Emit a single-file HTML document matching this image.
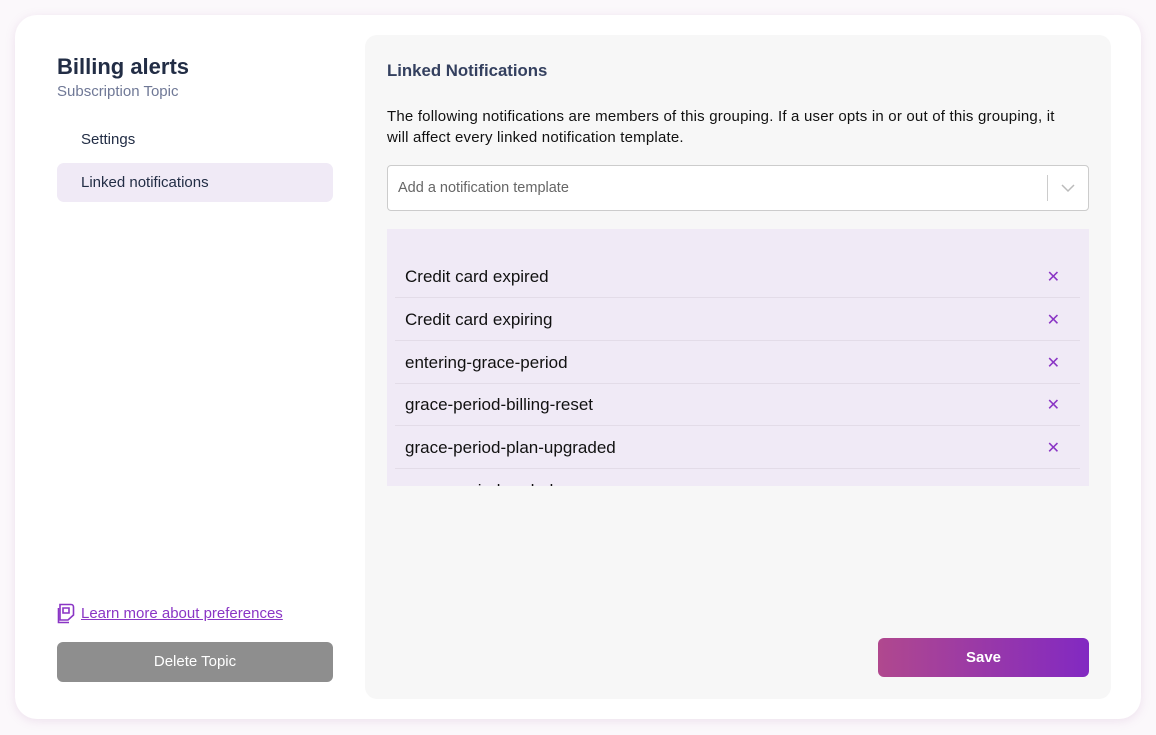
<!DOCTYPE html>
<html><head><meta charset="utf-8"><style>
*{box-sizing:border-box;margin:0;padding:0}
body{width:1156px;height:735px;background:#fbf8fb;font-family:"Liberation Sans",sans-serif;position:relative;overflow:hidden}
.card{position:absolute;left:15px;top:15px;width:1126px;height:704px;background:#fff;border-radius:22px;box-shadow:0 2px 10px rgba(180,120,180,.18)}
.abs{position:absolute}
.panel{left:365px;top:35px;width:746px;height:664px;background:#f7f7f7;border-radius:12px}
.row{position:absolute;left:8px;right:9px;height:43px;border-bottom:1px solid #e3dce8;font-size:17px;color:#111;padding-left:10px;line-height:43px}
.row span{position:absolute;right:20px;top:1px;color:#8a35c5;font-size:16px}
</style></head><body>
<div class="card"></div>
<div class="abs" style="left:57px;top:54px;font-size:22px;font-weight:bold;color:#222d45">Billing alerts</div>
<div class="abs" style="left:57px;top:83px;font-size:15px;color:#6f7896">Subscription Topic</div>
<div class="abs" style="left:81px;top:131px;font-size:15px;color:#222d45">Settings</div>
<div class="abs" style="left:57px;top:163px;width:276px;height:39px;background:#f0eaf6;border-radius:7px;font-size:15px;color:#222d45;padding-left:24px;line-height:39px">Linked notifications</div>
<svg class="abs" style="left:57px;top:603px" width="18" height="21" viewBox="0 0 18 21"><path d="M1.5 5V19.5H12" fill="none" stroke="#8a35c5" stroke-width="1.6"/><path d="M3 1.5H14C16 1.5 16.5 2.5 16.5 4.5V12L11 17H3Z" fill="#fff" stroke="#8a35c5" stroke-width="1.6"/><path d="M6 5H12V10H6Z" fill="none" stroke="#8a35c5" stroke-width="1.6"/></svg>
<div class="abs" style="left:81px;top:605px;font-size:15px;color:#8a35c5;text-decoration:underline">Learn more about preferences</div>
<div class="abs" style="left:57px;top:642px;width:276px;height:40px;background:#8e8e8e;border-radius:6px;color:#fff;font-size:15px;text-align:center;line-height:40px">Delete Topic</div>
<div class="abs panel"></div>
<div class="abs" style="left:387px;top:61px;font-size:16.8px;font-weight:bold;color:#34405f">Linked Notifications</div>
<div class="abs" style="left:387px;top:106px;font-size:15px;letter-spacing:0.2px;color:#111;line-height:21px;white-space:nowrap">The following notifications are members of this grouping. If a user opts in or out of this grouping, it<br>will affect every linked notification template.</div>
<div class="abs" style="left:387px;top:165px;width:702px;height:46px;background:#fff;border:1px solid #ccc;border-radius:4px">
<div class="abs" style="left:10px;top:14px;font-size:14.5px;color:#666">Add a notification template</div>
<div class="abs" style="left:659px;top:9px;width:1px;height:26px;background:#ccc"></div>
<svg class="abs" style="left:672px;top:16px" width="16" height="12" viewBox="0 0 16 12"><path d="M2 3L8 9L14 3" fill="none" stroke="#bbb" stroke-width="1.5"/></svg>
</div>
<div class="abs" style="left:387px;top:229px;width:702px;height:257px;background:#f0eaf6;overflow:hidden">
<div class="row" style="top:26px">Credit card expired<span>✕</span></div>
<div class="row" style="top:69px">Credit card expiring<span>✕</span></div>
<div class="row" style="top:112px">entering-grace-period<span>✕</span></div>
<div class="row" style="top:154px">grace-period-billing-reset<span>✕</span></div>
<div class="row" style="top:197px">grace-period-plan-upgraded<span>✕</span></div>
<div class="row" style="top:240px">grace-period-ended</div>
</div>
<div class="abs" style="left:878px;top:638px;width:211px;height:39px;border-radius:6px;background:linear-gradient(90deg,#b0488e,#8229c2);color:#fff;font-weight:bold;font-size:15px;text-align:center;line-height:39px">Save</div>
</body></html>
